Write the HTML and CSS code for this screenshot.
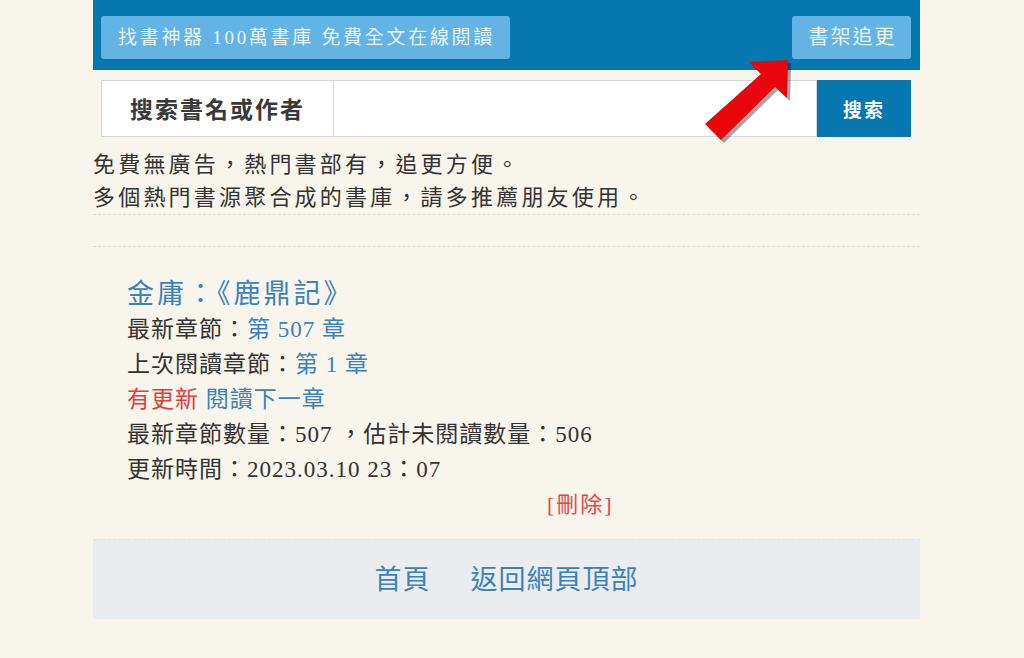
FILE: index.html
```html
<!DOCTYPE html>
<html lang="zh-Hant">
<head>
<meta charset="utf-8">
<title>書架追更</title>
<link rel="stylesheet" href="styles.css">
</head>
<body>
<div class="page">
  <header class="topbar">
    <a class="tbtn" href="#">找書神器 100萬書庫 免費全文在線閱讀</a>
    <a class="tbtn" href="#">書架追更</a>
  </header>
  <form class="search">
    <div class="search-label">搜索書名或作者</div>
    <input class="search-input" type="text">
    <button class="search-btn" type="button">搜索</button>
  </form>
  <div class="intro">
    <p>免費無廣告，熱門書部有，追更方便。</p>
    <p>多個熱門書源聚合成的書庫，請多推薦朋友使用。</p>
  </div>
  <div class="spacer"></div>
  <section class="book">
    <a class="book-title" href="#">金庸：《鹿鼎記》</a>
    <p>最新章節：<a href="#">第 507 章</a></p>
    <p>上次閱讀章節：<a href="#">第 1 章</a></p>
    <p><span class="new">有更新</span> <a href="#">閱讀下一章</a></p>
    <p>最新章節數量：507 ，估計未閱讀數量：506</p>
    <p>更新時間：2023.03.10 23：07</p>
    <div class="del"><a href="#">[刪除]</a></div>
  </section>
  <footer class="foot">
    <a href="#">首頁</a>
    <a href="#">返回網頁頂部</a>
  </footer>
</div>
<svg class="arrow" width="110" height="100" viewBox="0 0 110 100">
  <polygon class="arrow-shadow" points="87,4 48,6 60,18 4,68 20,84 74,31 86,42"/>
  <polygon class="arrow-body" points="84,1 45,3 57,15 1,65 17,81 71,28 83,39"/>
</svg>
</body>
</html>
```

FILE: styles.css
```css
html, body {
  margin: 0;
  padding: 0;
  background: #f8f5ec;
}
body {
  font-family: "Liberation Serif", "Noto Sans CJK TC", serif;
  color: #333;
  position: relative;
  min-height: 658px;
  overflow: hidden;
}
a { text-decoration: none; }
p { margin: 0; }

.page {
  width: 827px;
  margin-left: 93px;
}

.topbar {
  background: #0777b0;
  height: 70px;
  box-sizing: border-box;
  padding: 16px 9px 0 8px;
  display: flex;
  justify-content: space-between;
  align-items: flex-start;
}
.tbtn {
  display: block;
  height: 43px;
  line-height: 43px;
  background: #63b3e5;
  color: #e9f3fa;
  border-radius: 3px;
  font-size: 19px;
  letter-spacing: 2.7px;
  padding: 0 17px;
  box-sizing: border-box;
  white-space: nowrap;
}
.tbtn:first-child { width: 409px; }
.tbtn:last-child { width: 119px; text-align: center; padding: 0 0 0 2px; font-size: 20px; letter-spacing: 2px; }

.search {
  margin: 10px 9px 0 8px;
  display: flex;
  height: 57px;
}
.search-label {
  width: 233px;
  box-sizing: border-box;
  background: #fff;
  border: 1px solid #d6d6d6;
  font-size: 23px;
  font-weight: bold;
  line-height: 55px;
  text-align: center;
  color: #3a3a3a;
  letter-spacing: 2px;
  font-family: "Noto Sans CJK TC", sans-serif;
}
.search-input {
  flex: 1;
  border: 1px solid #d6d6d6;
  border-left: 0;
  background: #fff;
  margin: 0;
  padding: 0;
  outline: none;
}
.search-btn {
  width: 94px;
  border: 0;
  margin: 0;
  background: #0777b0;
  color: #f0f6fa;
  font-size: 19px;
  letter-spacing: 2px;
  font-family: "Noto Sans CJK TC", sans-serif;
  font-weight: bold;
}

.intro {
  margin-top: 11px;
  font-size: 22px;
  line-height: 33px;
  letter-spacing: 3.2px;
  color: #333;
  border-bottom: 1px dashed #dedbd2;
}
.spacer {
  height: 31px;
  border-bottom: 1px dashed #dedbd2;
}

.book {
  padding: 29px 0 0 34px;
  font-size: 23px;
  line-height: 35px;
  letter-spacing: 1px;
  color: #333;
}
.book a { color: #3b82bd; }
.book-title {
  display: block;
  font-size: 27px;
  line-height: 36px;
  letter-spacing: 3px;
}
.new { color: #e53b3b; }
.del {
  padding-left: 420px;
  margin-top: 3px;
  font-size: 22px;
  line-height: 30px;
  letter-spacing: 2px;
}
.book .del a { color: #e34848; }

.foot {
  margin-top: 19px;
  height: 80px;
  background: #e9edef;
  border-top: 1px dashed #dfe3e4;
  box-sizing: border-box;
  display: flex;
  justify-content: center;
  align-items: center;
  gap: 40px;
  padding-bottom: 4px;
}
.foot a {
  color: #3b82bd;
  font-size: 27px;
  font-family: "Noto Sans CJK TC", sans-serif;
  letter-spacing: 1px;
}

.arrow {
  position: absolute;
  left: 704px;
  top: 59px;
}
.arrow-shadow { fill: rgba(0,0,0,0.35); }
.arrow-body { fill: #e8050b; }
```
